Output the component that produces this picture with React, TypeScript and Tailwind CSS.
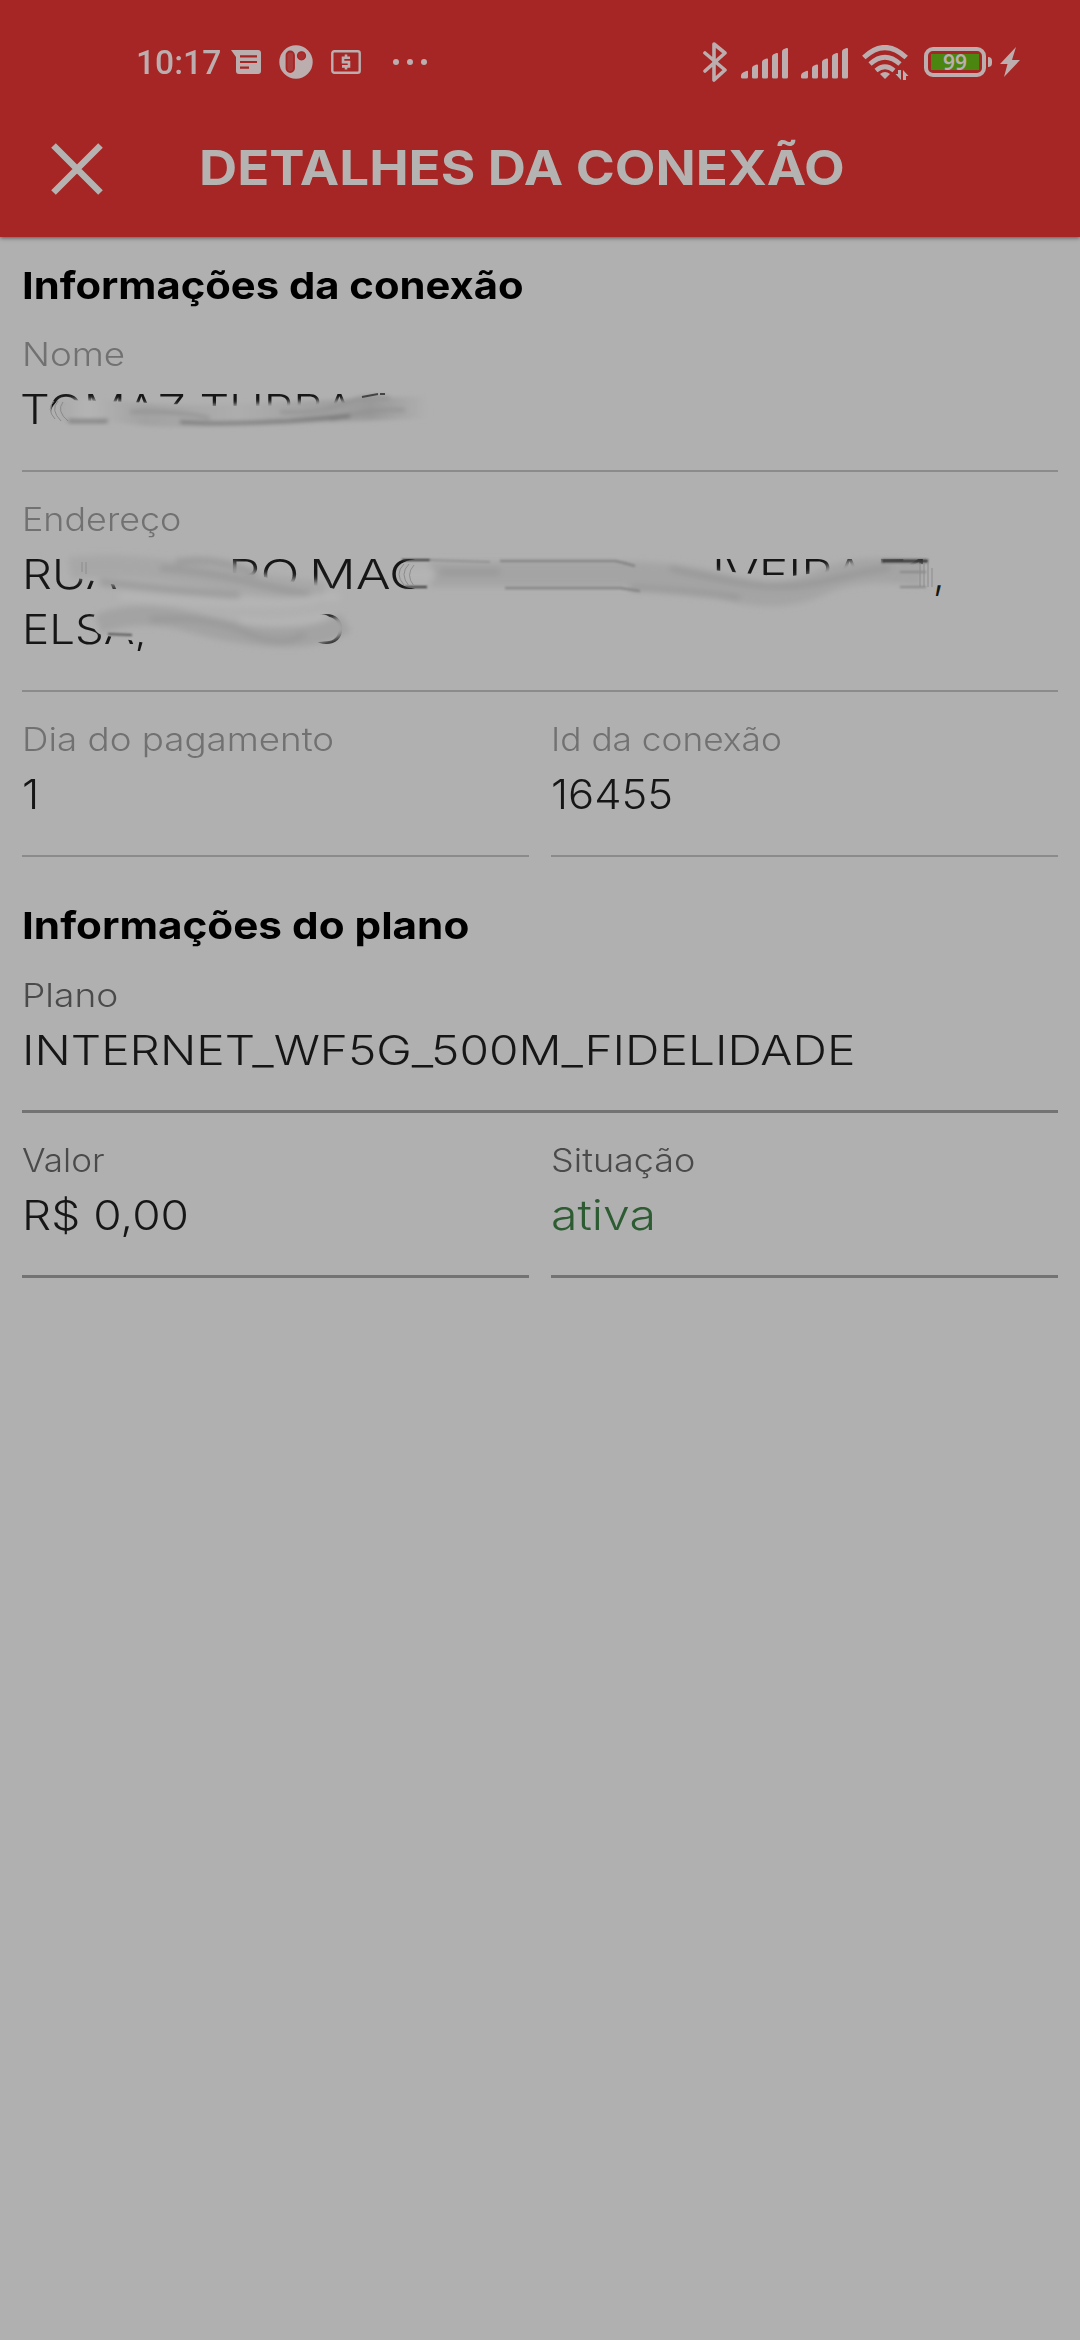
import { useLayoutEffect, useRef, useState } from "react";
import type { ReactNode } from "react";

/** Text stretched to fill the width of its own box. */
function Fit({ className, children }: { className: string; children: ReactNode }) {
  const box = useRef<HTMLSpanElement>(null);
  const inner = useRef<HTMLSpanElement>(null);
  const [scale, setScale] = useState(1);

  useLayoutEffect(() => {
    if (box.current && inner.current) {
      setScale(box.current.offsetWidth / inner.current.offsetWidth);
    }
  }, []);

  return (
    <span ref={box} className={`block shrink-0 whitespace-nowrap ${className}`}>
      <span ref={inner} className="inline-block origin-left" style={{ transform: `scaleX(${scale})` }}>
        {children}
      </span>
    </span>
  );
}

function Signal({ className }: { className: string }) {
  return (
    <svg className={`shrink-0 ${className}`} width="48" height="31" viewBox="0 0 48 31" fill="currentColor">
      <path d="M0 28q0-3 3-4l3-1.300q1-.3 1 1V29q0 1.500-1.500 1.500H1.500Q0 30.500 0 29z" />
      <path d="M11 20q0-1.500 1.500-2.200l3-1.300q1.500-.5 1.500 1V29q0 1.500-1.500 1.500h-3Q11 30.500 11 29z" />
      <path d="M21 14q0-1.500 1.500-2.200l3-1.300q1.500-.5 1.500 1V29q0 1.500-1.500 1.500h-3Q21 30.500 21 29z" />
      <path d="M31 8.500q0-1.500 1.500-2.200l3-1.300q1.500-.5 1.500 1V29q0 1.500-1.500 1.500h-3Q31 30.500 31 29z" />
      <path d="M41 3.500q0-1.500 1.500-2.200l3-1.200q1.500-.4 1.500 1V29q0 1.500-1.500 1.500h-3Q41 30.500 41 29z" />
    </svg>
  );
}

function StatusBar() {
  return (
    <div className="flex h-[124px] items-center pl-[136px] text-[#bcaeae]">
      <Fit className="w-[85px] font-[Roboto] text-[34px] leading-none font-medium">10:17</Fit>
      <svg className="ml-[10px] shrink-0" width="30" height="24" viewBox="0 0 30 24">
        <path fill="currentColor" d="M0 0h27q3 0 3 3v18q0 3-3 3H8q-3 0-3-3V7z" />
        <path stroke="#a62525" strokeWidth="2.200" d="M9 6.300h17M9 12h17M9 17.700h9" />
      </svg>
      <svg className="ml-[18px] shrink-0" width="34" height="34" viewBox="0 0 34 34">
        <circle cx="17" cy="17" r="16.700" fill="currentColor" />
        <rect x="7.500" y="6.500" width="7.500" height="20.500" rx="3.700" fill="#a93a3a" stroke="#a62525" strokeWidth="1.800" />
        <circle cx="22.500" cy="10.800" r="4" fill="#a83030" stroke="#a62525" strokeWidth="1.200" />
      </svg>
      <svg className="ml-[18px] shrink-0" width="30" height="24" viewBox="0 0 30 24" fill="none" stroke="currentColor">
        <rect x="1.300" y="1.300" width="27.400" height="21.400" rx="2" strokeWidth="2.400" />
        <path strokeWidth="2.600" d="M19 7.800h-7v4.300h6v4.300h-7M15 4.500v3M15 16.500v3" />
      </svg>
      <svg className="ml-[32px] shrink-0" width="34" height="8" viewBox="0 0 34 8" fill="currentColor">
        <circle cx="3" cy="4" r="3" />
        <circle cx="17" cy="4" r="3" />
        <circle cx="31" cy="4" r="3" />
      </svg>

      <svg
        className="ml-[275px] shrink-0"
        width="26"
        height="40"
        viewBox="0 0 26 40"
        fill="none"
        stroke="currentColor"
        strokeWidth="3.600"
        strokeLinejoin="round"
        strokeLinecap="round"
      >
        <path d="M3 11l20 17-11 10V2l11 9L3 29" />
      </svg>
      <Signal className="ml-[13px] mt-[2px]" />
      <Signal className="ml-[12px] mt-[2px]" />
      <svg className="ml-[13px] mt-[2px] shrink-0" width="48" height="36" viewBox="0 0 48 36" fill="none" stroke="currentColor">
        <path strokeWidth="5" d="M1.800 12.500q21-20 42.400 0" />
        <path strokeWidth="4.800" d="M8 19q15-13.500 30 0" />
        <path strokeWidth="4.600" d="M14 25.500q9-7.500 18 0" />
        <path fill="currentColor" stroke="none" d="M18 29q5-4 10 0l-5 5z" />
        <path fill="currentColor" stroke="none" d="M36 25h3v10l-5.500-6H36zM41 35V25l5.500 6H44v4z" />
      </svg>
      <div className="ml-[14px] flex h-[30px] w-[62px] shrink-0 items-center justify-center rounded-[9px] border-4 border-current p-[3px]">
        <span className="flex h-full w-full items-center justify-center bg-[#4b8610] font-['Noto_Sans'] text-[21px] leading-none font-semibold">
          99
        </span>
      </div>
      <div className="ml-[2px] h-[10px] w-[4px] shrink-0 rounded-r-full bg-current" />
      <svg className="ml-[8px] shrink-0" width="20" height="30" viewBox="0 0 20 30" fill="currentColor">
        <path d="M16 0L0 17h7.500L4 30l16-17h-8z" />
      </svg>
    </div>
  );
}

type FieldProps = { label: string; labelWidth: string; muted?: boolean; className?: string; children: ReactNode };

function Field({ label, labelWidth, muted, className = "", children }: FieldProps) {
  return (
    <div
      className={`relative ${className} ${
        muted ? "border-b-2 border-[#8b8b8b] pb-[33px]" : "border-b-[3px] border-[#737373] pb-[32px]"
      }`}
    >
      <Fit
        className={`h-[56px] text-[32.5px] leading-[58px] font-light ${labelWidth} ${
          muted ? "text-[#717171]" : "text-[#4a4a4a]"
        }`}
      >
        {label}
      </Fit>
      <div className="text-[41.3px] leading-[55px] font-light text-[#161616]">{children}</div>
    </div>
  );
}

function NameSmudge() {
  return (
    <svg className="absolute left-0 top-[56px]" width="430" height="70" viewBox="22 382 430 70" fill="none">
      <defs>
        <filter id="soft-a" x="-20%" y="-80%" width="140%" height="260%">
          <feGaussianBlur stdDeviation="2" />
        </filter>
        <linearGradient id="fade-a" x1="50" y1="0" x2="428" y2="0" gradientUnits="userSpaceOnUse">
          <stop offset="0" stopColor="#a6a6a6" />
          <stop offset=".1" stopColor="#b4b4b4" />
          <stop offset=".25" stopColor="#a2a2a2" />
          <stop offset=".5" stopColor="#adadad" />
          <stop offset=".85" stopColor="#999999" />
          <stop offset="1" stopColor="#b0b0b0" />
        </linearGradient>
      </defs>
      <path d="M64 413L130 415L210 419L300 419L345 416L385 412" stroke="#b0b0b0" strokeWidth="26" strokeLinecap="round" />
      <g filter="url(#soft-a)">
        <path d="M60 411Q90 408 130 413T240 415T330 411T428 407" stroke="url(#fade-a)" strokeWidth="22" />
        <path d="M130 412q40-2 80 6M280 412q40 2 62-8t48-6M330 420q40-12 75-10" stroke="#929292" strokeWidth="3" />
        <path d="M68 421h40M180 422q40 3 110-1l60-5" stroke="#5e5e5e" strokeWidth="2.500" />
      </g>
      <path d="M362 397l16-3M380 394h5" stroke="#444" strokeWidth="2" />
      <path d="M54 401q-8 8 1 18M58 401q-8 9 3 20M63 402q-7 9 5 19" stroke="#898989" strokeWidth="1" />
    </svg>
  );
}

function AddressSmudge() {
  return (
    <svg className="absolute left-0 top-[56px]" width="960" height="120" viewBox="22 547 960 120" fill="none">
      <defs>
        <filter id="soft-b" x="-10%" y="-60%" width="120%" height="220%">
          <feGaussianBlur stdDeviation="3" />
        </filter>
        <filter id="soft-edge" x="-10%" y="-60%" width="120%" height="220%">
          <feGaussianBlur stdDeviation=".9" />
        </filter>
      </defs>
      <g stroke="#b0b0b0" strokeLinecap="round">
        <path d="M78 565L110 571L180 579L250 588L330 601" strokeWidth="26" />
        <path d="M112 564L215 566" strokeWidth="20" />
        <path d="M412 574L640 574L690 582L785 591L850 583L922 578" strokeWidth="28" />
        <path d="M660 562L697 566" strokeWidth="18" />
        <path d="M106 622L150 630L250 636L322 628" strokeWidth="27" />
      </g>
      <g filter="url(#soft-b)">
        <path d="M70 568Q120 562 190 574T325 593" stroke="#a7a7a7" strokeWidth="22" />
        <path d="M160 568q50 4 90 14t60 12M100 582q70 8 140 14M176 562q40-6 80 12" stroke="#999999" strokeWidth="6" />
        <path d="M120 596q70 8 170 6l50-6" stroke="#b5b5b5" strokeWidth="8" />
        <path d="M98 624Q140 608 190 622T280 637T346 623" stroke="#a3a3a3" strokeWidth="20" />
        <path d="M150 620q60-5 95 12t60 2" stroke="#999999" strokeWidth="6" />
        <path d="M240 620q40 8 85-4" stroke="#b5b5b5" strokeWidth="7" />
        <path d="M430 574H620Q680 574 730 588T820 583T922 574" stroke="#a4a4a4" strokeWidth="25" />
        <path d="M440 572h60M630 588q50 2 110 10M670 568q40 10 80 16t80-4t60-12" stroke="#969696" strokeWidth="5" />
        <path d="M404 575h30" stroke="#b4b4b4" strokeWidth="12" />
      </g>
      <g filter="url(#soft-edge)">
        <path d="M402 560h30M405 587h22" stroke="#333" strokeWidth="2" />
        <path d="M430 560l60 2" stroke="#929292" strokeWidth="2" />
        <path d="M500 561h115q10 2 20 5M505 588h115l20 3" stroke="#868686" strokeWidth="2.500" />
        <path d="M882 561h46" stroke="#333" strokeWidth="3" />
        <path d="M900 572h26M900 587h26" stroke="#888" strokeWidth="2" />
        <path d="M108 634l24 1" stroke="#555" strokeWidth="2" />
      </g>
      <path d="M82 562v10M86 562v12M404 564q-10 10 0 21M409 564q-10 10 0 22M414 565q-9 10 0 21M920 563v24M924 563v24M928 563v24M932 568v19" stroke="#8c8c8c" strokeWidth="1" />
    </svg>
  );
}

export default function App() {
  return (
    <div className="min-h-[2340px] w-[1080px] bg-[#b0b0b0] font-[Inter,sans-serif]">
      <header className="h-[237px] bg-[#a62525] shadow-[0_1px_4px_rgba(0,0,0,0.5)]">
        <StatusBar />
        <div className="flex h-[90px] items-center pl-[51px] text-[#b5b3b1]">
          <svg className="shrink-0" width="52" height="52" viewBox="0 0 52 52" stroke="currentColor" strokeWidth="6.500">
            <path d="M2.500 2.500l47 47M49.500 2.500l-47 47" />
          </svg>
          <h1>
            <Fit className="mb-[2px] ml-[96px] w-[646px] text-[48.5px] leading-[88px] font-bold">DETALHES DA CONEXÃO</Fit>
          </h1>
        </div>
      </header>

      <main className="px-[22px] pt-[21px]">
        <h2>
          <Fit className="h-[55px] w-[502px] text-[37.5px] leading-[55px] font-bold text-black">Informações da conexão</Fit>
        </h2>
        <Field label="Nome" labelWidth="w-[103px]" muted className="mt-[13px]">
          <Fit className="-ml-[2px] w-[335px]">TOMAZ TURBA</Fit>
          <NameSmudge />
        </Field>
        <Field label="Endereço" labelWidth="w-[159px]" muted className="mt-[19px]">
          <div className="flex">
            <Fit className="w-[96px]">RUA</Fit>
            <Fit className="ml-[110px] w-[72px]">RO</Fit>
            <Fit className="ml-[9px] w-[118px]">MAC</Fit>
            <Fit className="ml-[257px] w-[182px]">LIVEIRA</Fit>
            <Fit className="ml-[10px] w-[52px]">E1</Fit>
            <Fit className="ml-[5px] w-[12px]">,</Fit>
          </div>
          <div className="flex">
            <Fit className="w-[125px]">ELSA,</Fit>
            <Fit className="ml-[160px] w-[38px]">O</Fit>
          </div>
          <AddressSmudge />
        </Field>
        <div className="mt-[19px] grid grid-cols-2 gap-[22px]">
          <Field label="Dia do pagamento" labelWidth="w-[312px]" muted>
            <Fit className="w-[17px]">1</Fit>
          </Field>
          <Field label="Id da conexão" labelWidth="w-[231px]" muted>
            <Fit className="w-[122px]">16455</Fit>
          </Field>
        </div>

        <h2 className="mt-[41px]">
          <Fit className="h-[55px] w-[447px] text-[37.5px] leading-[55px] font-bold text-black">Informações do plano</Fit>
        </h2>
        <Field label="Plano" labelWidth="w-[96px]" className="mt-[14px]">
          <Fit className="w-[833px]">INTERNET_WF5G_500M_FIDELIDADE</Fit>
        </Field>
        <div className="mt-[19px] grid grid-cols-2 gap-[22px]">
          <Field label="Valor" labelWidth="w-[83px]">
            <Fit className="w-[167px]">R$ 0,00</Fit>
          </Field>
          <Field label="Situação" labelWidth="w-[144px]">
            <Fit className="w-[105px] text-[#2d5c32]">ativa</Fit>
          </Field>
        </div>
      </main>
    </div>
  );
}
